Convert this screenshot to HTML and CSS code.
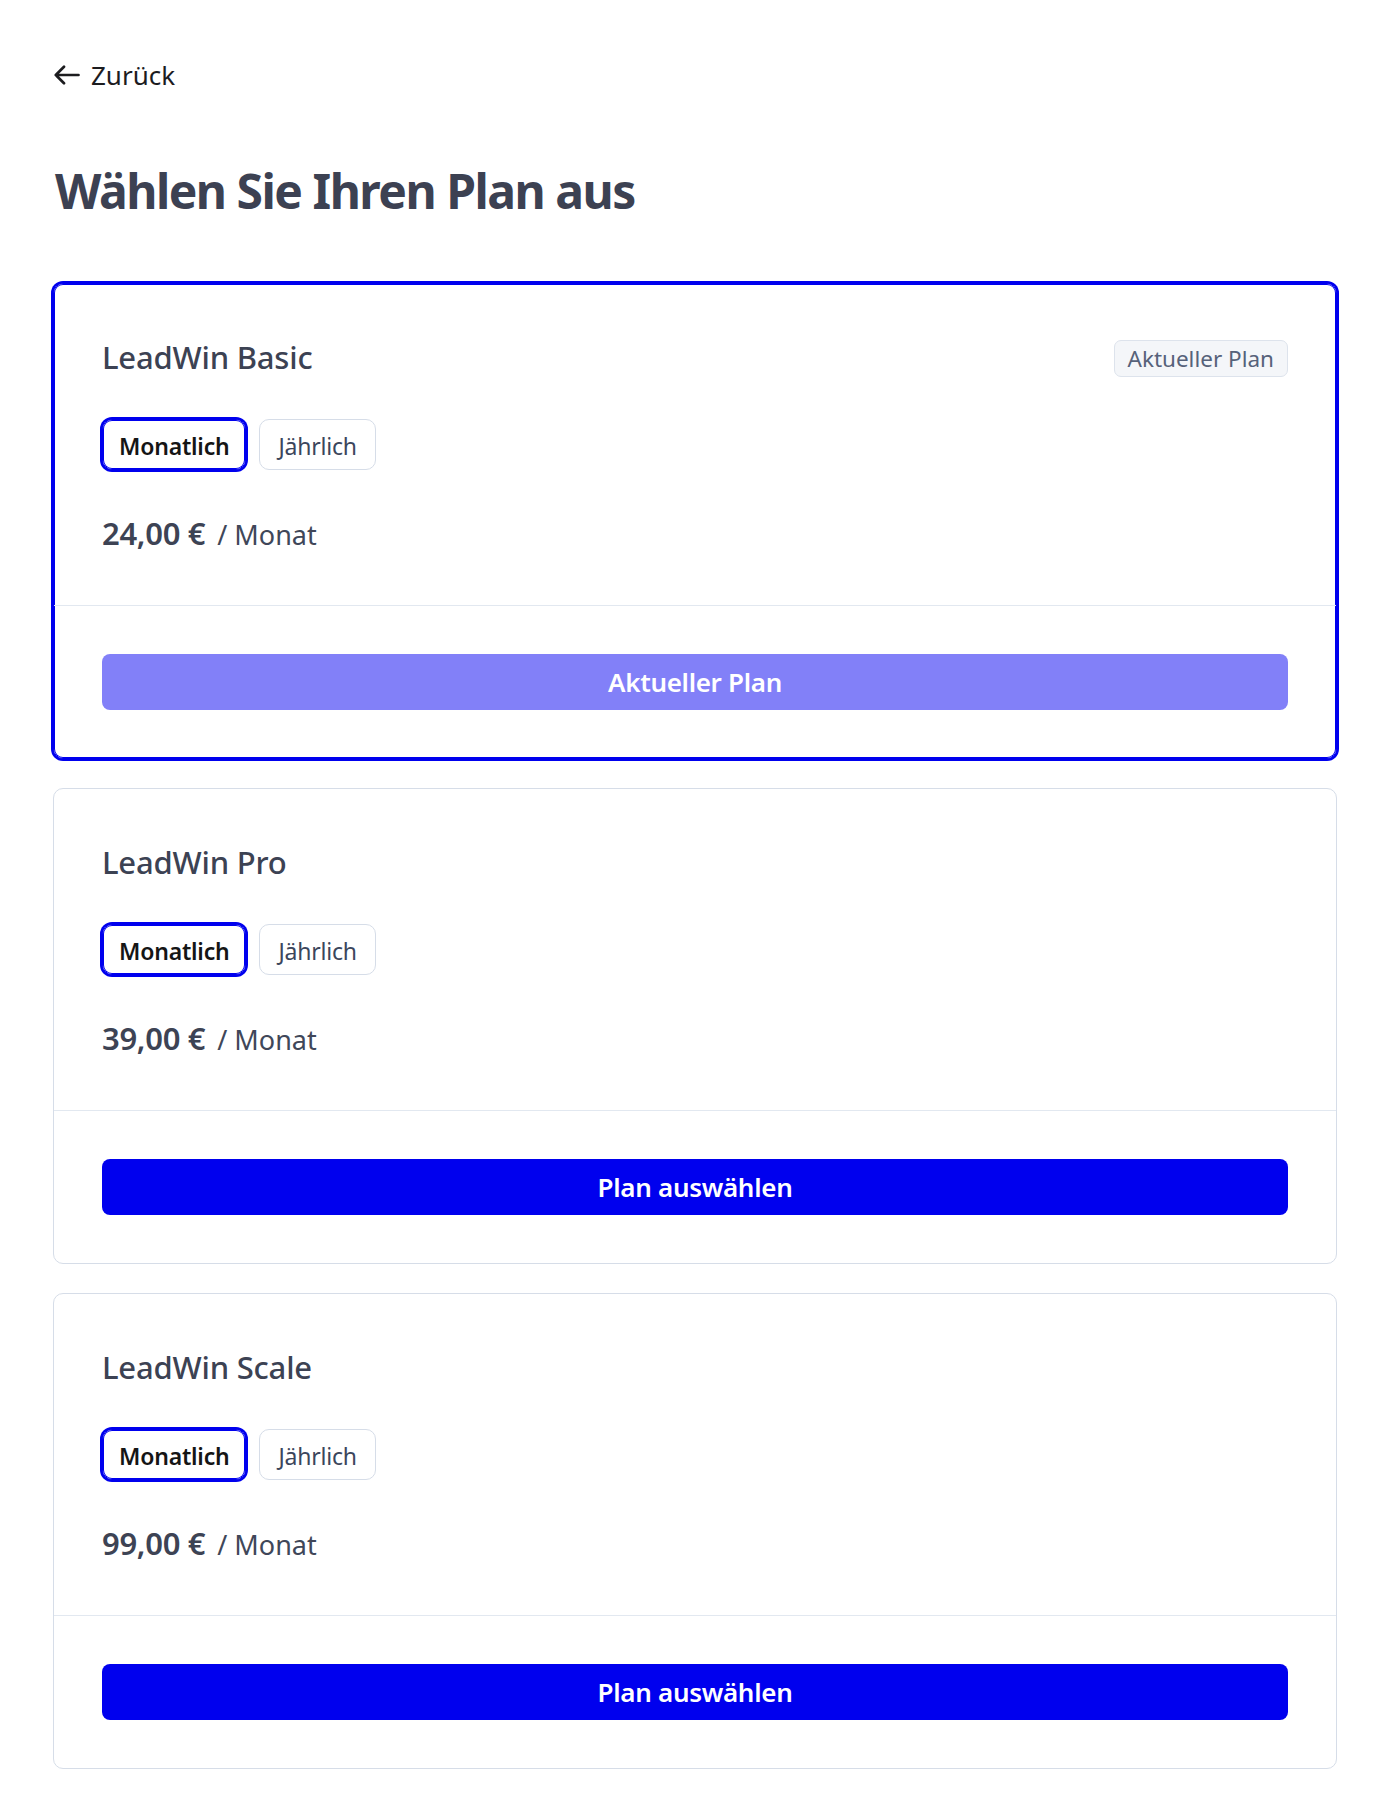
FILE: index.html
```html
<!DOCTYPE html>
<html lang="de">
<head>
<meta charset="utf-8">
<title>Plan auswählen</title>
<link rel="stylesheet" href="styles.css">
</head>
<body>
<div class="page">
  <a class="back" href="#">
    <svg class="back-icon" width="26" height="20" viewBox="0 0 26 20" fill="none" stroke="currentColor" stroke-width="2.7" stroke-linecap="round" stroke-linejoin="round"><path d="M10 1.8 L1.8 10 L10 18.2 M1.8 10 H24.5"/></svg>
    <span>Zurück</span>
  </a>

  <h1 class="title">Wählen Sie Ihren Plan aus</h1>

  <div class="plans">
    <section class="card selected">
      <div class="card-body">
        <div class="card-head">
          <h2 class="plan-name">LeadWin Basic</h2>
          <span class="badge">Aktueller Plan</span>
        </div>
        <div class="toggle">
          <button class="toggle-btn active">Monatlich</button>
          <button class="toggle-btn">Jährlich</button>
        </div>
        <p class="price"><span class="amount">24,00 €</span><span class="period">/ Monat</span></p>
      </div>
      <div class="card-foot">
        <button class="cta disabled">Aktueller Plan</button>
      </div>
    </section>

    <section class="card">
      <div class="card-body">
        <div class="card-head">
          <h2 class="plan-name">LeadWin Pro</h2>
        </div>
        <div class="toggle">
          <button class="toggle-btn active">Monatlich</button>
          <button class="toggle-btn">Jährlich</button>
        </div>
        <p class="price"><span class="amount">39,00 €</span><span class="period">/ Monat</span></p>
      </div>
      <div class="card-foot">
        <button class="cta">Plan auswählen</button>
      </div>
    </section>

    <section class="card">
      <div class="card-body">
        <div class="card-head">
          <h2 class="plan-name">LeadWin Scale</h2>
        </div>
        <div class="toggle">
          <button class="toggle-btn active">Monatlich</button>
          <button class="toggle-btn">Jährlich</button>
        </div>
        <p class="price"><span class="amount">99,00 €</span><span class="period">/ Monat</span></p>
      </div>
      <div class="card-foot">
        <button class="cta">Plan auswählen</button>
      </div>
    </section>
  </div>
</div>
</body>
</html>
```

FILE: styles.css
```css
* { box-sizing: border-box; }

html, body {
  margin: 0;
  background: #ffffff;
}

body {
  font-family: "Noto Sans", "Open Sans", sans-serif;
  color: #3d4354;
}

.page {
  padding: 57px 45px 49px 53px;
}

.back {
  display: flex;
  align-items: center;
  gap: 11px;
  height: 36px;
  padding-left: 1px;
  font-size: 26px;
  color: #1c1c1f;
  text-decoration: none;
}

.back-icon {
  display: block;
  color: #1c1c1f;
}

.title {
  margin: 70px 0 0 2px;
  font-size: 48px;
  line-height: 56px;
  font-weight: 700;
  letter-spacing: -1.5px;
  color: #3c4152;
}

.plans {
  margin-top: 64px;
  display: flex;
  flex-direction: column;
  gap: 29px;
}

.card {
  border: 1px solid #d6dde8;
  border-radius: 10px;
  background: #fff;
}

.card.selected {
  border-color: #0000ee;
  box-shadow: 0 0 0 2px #0000ee, inset 0 0 0 1px #0000ee;
}

.card-body {
  padding: 48px 48px 52px;
}

.card-head {
  display: flex;
  justify-content: space-between;
  align-items: center;
  height: 53px;
}

.plan-name {
  margin: 0 0 4px;
  font-size: 31px;
  line-height: 40px;
  font-weight: 500;
  color: #3c4253;
  letter-spacing: -0.2px;
}

.badge {
  display: inline-block;
  height: 37px;
  line-height: 35px;
  padding: 0 13px;
  border: 1px solid #dde3ec;
  border-radius: 7px;
  background: #f4f6f9;
  font-size: 22.5px;
  color: #56627a;
}

.toggle {
  display: flex;
  gap: 13px;
  margin-top: 34px;
}

.toggle-btn {
  height: 51px;
  padding: 4px 18px 0;
  border: 1px solid #d6dde8;
  border-radius: 10px;
  background: #fff;
  font-family: inherit;
  font-size: 23px;
  line-height: 45px;
  color: #3b465c;
  letter-spacing: -0.2px;
  cursor: pointer;
}

.toggle-btn.active {
  padding: 4px 16px 0;
  border-color: #0000ee;
  box-shadow: 0 0 0 2px #0000ee, inset 0 0 0 1px #0000ee;
  color: #151515;
  font-weight: 600;
}

.price {
  margin: 43px 0 0;
  height: 40px;
  line-height: 40px;
  white-space: nowrap;
  color: #3d4354;
}

.amount {
  font-size: 31px;
  font-weight: 600;
  letter-spacing: -0.3px;
}

.period {
  margin-left: 12px;
  font-size: 27px;
  font-weight: 400;
  color: #404759;
}

.card-foot {
  border-top: 1px solid #e2e8f0;
  padding: 48px;
}

.cta {
  display: block;
  width: 100%;
  height: 56px;
  border: 0;
  border-radius: 8px;
  background: #0000ee;
  color: #ffffff;
  font-family: inherit;
  font-size: 26px;
  font-weight: 600;
  letter-spacing: -0.3px;
  cursor: pointer;
}

.cta.disabled {
  background: #8280f8;
  cursor: default;
}
```
